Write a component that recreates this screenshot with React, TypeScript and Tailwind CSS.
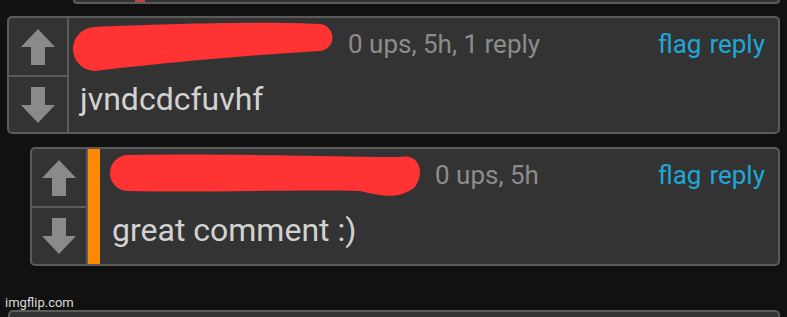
type Arrow = { down?: boolean }

const VoteArrow = ({ down }: Arrow) => (
  <svg width="34" height="36" viewBox="0 0 34 36" className={down ? "rotate-180" : ""}>
    <path d="M17 0 L34 18 L24 18 L24 36 L10 36 L10 18 L0 18 Z" fill="#8a8a8a" />
  </svg>
)

type Props = {
  className: string
  reply?: boolean
  scribble: React.ReactNode
  meta: string
  body: string
}

const Comment = ({ className, reply, scribble, meta, body }: Props) => (
  <div className={`flex border-2 border-[#5b5b5b] rounded-[5px] bg-[#333] overflow-hidden ${className}`}>
    <div className={`flex flex-col shrink-0 border-r-2 border-[#5b5b5b] ${reply ? "w-[56px]" : "w-[60px]"}`}>
      <div className="h-[59px] flex items-center justify-center border-b-2 border-[#5b5b5b]">
        <VoteArrow />
      </div>
      <div className="flex-1 flex items-center justify-center">
        <VoteArrow down />
      </div>
    </div>
    {reply && <div className="w-[12px] shrink-0 bg-[#ff8a00]" />}
    <div className="flex-1 flex flex-col min-w-0">
      <div className="h-[57px] flex items-start">
        {scribble}
        <span className="mt-[13px] ml-[4px] text-[26px] leading-none text-[#8c8c8c] whitespace-nowrap">{meta}</span>
        <div className="ml-auto mr-[13px] mt-[13px] flex gap-[8px] text-[26px] leading-none text-[#1fa6d6]">
          <span>flag</span>
          <span>reply</span>
        </div>
      </div>
      <div className={`flex-1 pt-[8px] text-[32px] leading-none text-[#d2d2d2] ${reply ? "pl-[12px]" : "pl-[11px]"}`}>
        {body}
      </div>
    </div>
  </div>
)

export default function App() {
  return (
    <div
      className="relative w-[787px] h-[317px] overflow-hidden bg-[#111] flex flex-col"
      style={{ fontFamily: "Roboto, 'Noto Sans', sans-serif" }}
    >
      <div className="ml-[73px] w-[707px] h-[4px] shrink-0 border-2 border-t-0 border-[#5b5b5b] rounded-b-[5px] bg-[#333]">
        <div className="ml-[60px] w-[10px] h-[2px] bg-[#b44]" />
      </div>

      <Comment
        className="mt-[12px] ml-[7px] w-[773px] h-[118px] shrink-0"
        meta="0 ups, 5h, 1 reply"
        body="jvndcdcfuvhf"
        scribble={
          <svg width="275" height="56" viewBox="0 0 275 56" className="shrink-0">
            <path
              d="M26 9 C90 6 200 3 250 6 A13 13 0 0 1 250 33 C200 36 120 42 26 53 A22 22 0 0 1 26 9 Z"
              fill="#ff3333"
            />
          </svg>
        }
      />

      <Comment
        reply
        className="mt-[13px] ml-[30px] w-[750px] h-[119px] shrink-0"
        meta="0 ups, 5h"
        body="great comment :)"
        scribble={
          <svg width="331" height="56" viewBox="0 0 331 56" className="shrink-0">
            <path
              d="M28 6 C120 4 250 8 300 8 C320 4 325 24 315 38 C300 50 285 48 260 42 C200 40 100 44 28 42 A18 18 0 0 1 28 6 Z"
              fill="#ff3333"
            />
          </svg>
        }
      />

      <div className="mt-[44px] ml-[8px] w-[772px] flex-1 border-2 border-b-0 border-[#5b5b5b] rounded-t-[5px] bg-[#333]" />

      <span className="absolute left-[5px] top-[296px] text-[13px] leading-none text-[#d8d8d8]">imgflip.com</span>
    </div>
  )
}
